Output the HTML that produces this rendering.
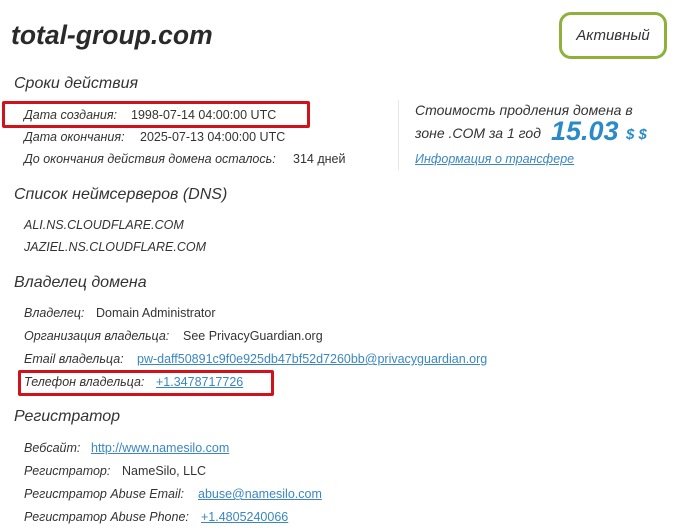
<!DOCTYPE html>
<html><head><meta charset="utf-8"><style>
*{margin:0;padding:0;box-sizing:border-box}
body{width:685px;height:531px;background:#fff;position:relative;overflow:hidden;font-family:"Liberation Sans","DejaVu Sans",sans-serif;color:#333}
.a{position:absolute;white-space:nowrap;line-height:18px}
.t{font-size:26.5px;font-style:italic;font-weight:bold;color:#2a2a2a;line-height:32px}
.h{font-size:16px;font-style:italic;color:#333;line-height:20px}
.l{font-size:12.5px;font-style:italic;color:#333}
.v{font-size:12.5px;color:#333}
.k{font-size:12.5px;color:#3a87c2;text-decoration:underline}
.box{position:absolute;border:3px solid #d0121b;border-radius:2px}
</style></head><body>
<div class="a t" style="left:11px;top:19px">total-group.com</div>
<div class="a" style="left:559px;top:12px;width:108px;height:47px;border:3px solid #8fb03c;border-radius:12px;font-size:15px;font-style:italic;color:#333;text-align:center;line-height:41px">Активный</div>

<div class="a h" style="left:14px;top:74px">Сроки действия</div>
<div class="box" style="left:2px;top:101px;width:308px;height:27px"></div>
<div class="a l" style="left:24px;top:106px">Дата создания:</div><div class="a v" style="left:131px;top:106px">1998-07-14 04:00:00 UTC</div>
<div class="a l" style="left:24px;top:128px">Дата окончания:</div><div class="a v" style="left:140px;top:128px">2025-07-13 04:00:00 UTC</div>
<div class="a l" style="left:24px;top:150px">До окончания действия домена осталось:</div><div class="a v" style="left:293px;top:150px">314 дней</div>

<div style="position:absolute;left:398px;top:100px;width:1px;height:70px;background:#e6e6e6"></div>
<div class="a" style="left:415px;top:101px;font-size:14px;font-style:italic;color:#333">Стоимость продления домена в</div>
<div class="a" style="left:415px;top:124px;font-size:14px;font-style:italic;color:#333">зоне .COM за 1 год</div>
<div class="a" style="left:551px;top:114px;font-size:27px;font-style:italic;font-weight:bold;color:#2a8bc8;line-height:34px">15.03</div>
<div class="a" style="left:626px;top:126px;font-size:15px;font-style:italic;font-weight:bold;color:#2a8bc8">$ $</div>
<div class="a k" style="left:415px;top:150px;font-style:italic">Информация о трансфере</div>

<div class="a h" style="left:14px;top:185px">Список неймсерверов (DNS)</div>
<div class="a l" style="left:24px;top:216px">ALI.NS.CLOUDFLARE.COM</div>
<div class="a l" style="left:24px;top:238px">JAZIEL.NS.CLOUDFLARE.COM</div>

<div class="a h" style="left:14px;top:273px">Владелец домена</div>
<div class="a l" style="left:24px;top:304px">Владелец:</div><div class="a v" style="left:96px;top:304px">Domain Administrator</div>
<div class="a l" style="left:24px;top:327px">Организация владельца:</div><div class="a v" style="left:183px;top:327px">See PrivacyGuardian.org</div>
<div class="a l" style="left:24px;top:350px">Email владельца:</div><div class="a k" style="left:137px;top:350px">pw-daff50891c9f0e925db47bf52d7260bb@privacyguardian.org</div>
<div class="box" style="left:18px;top:370px;width:256px;height:26px"></div>
<div class="a l" style="left:24px;top:373px">Телефон владельца:</div><div class="a k" style="left:156px;top:373px">+1.3478717726</div>

<div class="a h" style="left:14px;top:407px">Регистратор</div>
<div class="a l" style="left:24px;top:439px">Вебсайт:</div><div class="a k" style="left:91px;top:439px">http://www.namesilo.com</div>
<div class="a l" style="left:24px;top:462px">Регистратор:</div><div class="a v" style="left:122px;top:462px">NameSilo, LLC</div>
<div class="a l" style="left:24px;top:485px">Регистратор Abuse Email:</div><div class="a k" style="left:198px;top:485px">abuse@namesilo.com</div>
<div class="a l" style="left:24px;top:508px">Регистратор Abuse Phone:</div><div class="a k" style="left:201px;top:508px">+1.4805240066</div>
</body></html>
